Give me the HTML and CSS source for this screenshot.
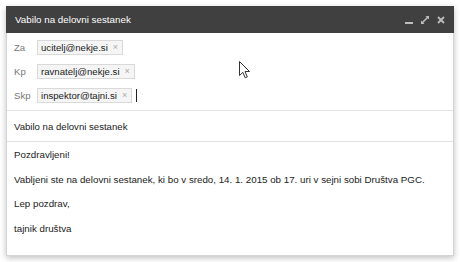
FILE: index.html
```html
<!DOCTYPE html>
<html lang="sl">
<head>
<meta charset="utf-8">
<link rel="stylesheet" href="styles.css">
</head>
<body>
<div class="window">
  <div class="titlebar">
    <span class="title">Vabilo na delovni sestanek</span>
    <div class="controls">
      <svg class="ctl" width="10" height="10" viewBox="0 0 10 10"><rect x="1" y="7" width="8" height="2" fill="#bdbdbd"/></svg>
      <svg class="ctl" width="10" height="10" viewBox="0 0 10 10"><path d="M5.5 1H9V4.5L7.8 3.3 3.3 7.8 4.5 9H1V5.5L2.2 6.7 6.7 2.2Z" fill="#bdbdbd"/></svg>
      <svg class="ctl" width="10" height="10" viewBox="0 0 10 10"><path d="M2 2L8 8M8 2L2 8" stroke="#bdbdbd" stroke-width="1.8"/></svg>
    </div>
  </div>
  <div class="recipients">
    <div class="row"><span class="label">Za</span><span class="chip">ucitelj@nekje.si<span class="x">×</span></span></div>
    <div class="row"><span class="label">Kp</span><span class="chip">ravnatelj@nekje.si<span class="x">×</span></span></div>
    <div class="row"><span class="label">Skp</span><span class="chip">inspektor@tajni.si<span class="x">×</span></span><span class="caret"></span></div>
  </div>
  <div class="subject">Vabilo na delovni sestanek</div>
  <div class="message">
    <p>Pozdravljeni!</p>
    <p>Vabljeni ste na delovni sestanek, ki bo v sredo, 14. 1. 2015 ob 17. uri v sejni sobi Društva PGC.</p>
    <p>Lep pozdrav,</p>
    <p>tajnik društva</p>
  </div>
  <svg class="pointer" width="12" height="18" viewBox="0 0 12 18"><path d="M0.5 0.5V14.5L3.8 11.3 6.2 16.8 8.3 15.9 6 10.5H10.5Z" fill="#fff" stroke="#333" stroke-width="1"/></svg>
</div>
</body>
</html>
```
FILE: styles.css
```css
* { box-sizing: border-box; }
html, body { margin: 0; background: #fff; }
body {
  padding: 6px;
  font-family: Arial, "Liberation Sans", sans-serif;
  font-size: 9.6px;
  color: #222;
}
.window {
  position: relative;
  width: 448px;
  height: 250px;
  background: #fff;
  border: 1px solid #d4d4d4;
  border-top: none;
  box-shadow: 0 2px 6px rgba(0,0,0,0.25);
}
.titlebar {
  height: 27px;
  margin: 0 -1px;
  background: #404040;
  color: #fff;
  display: flex;
  align-items: center;
  padding: 0 8px 0 9px;
}
.title { flex: 1; font-size: 9.8px; }
.controls { display: flex; gap: 6px; align-items: center; }
.recipients {
  padding: 2px 0 3px;
  border-bottom: 1px solid #e3e3e3;
}
.row {
  height: 24px;
  display: flex;
  align-items: center;
  padding-left: 7px;
}
.label { width: 23px; color: #777; }
.chip {
  display: inline-flex;
  align-items: center;
  height: 15px;
  padding: 0 4px 0 3px;
  background: #f5f5f5;
  border: 1px solid #d9d9d9;
  color: #222;
}
.x { margin-left: 5px; color: #aaa; font-size: 9px; }
.caret {
  width: 1px;
  height: 13px;
  background: #222;
  margin-left: 4px;
}
.subject {
  height: 31px;
  display: flex;
  align-items: center;
  padding-left: 7px;
  border-bottom: 1px solid #e3e3e3;
}
.message { padding: 1px 7px 0; font-size: 9.75px; }
.message p { margin: 0; height: 24.5px; line-height: 24.5px; }
.pointer { position: absolute; left: 232px; top: 55px; }
```
